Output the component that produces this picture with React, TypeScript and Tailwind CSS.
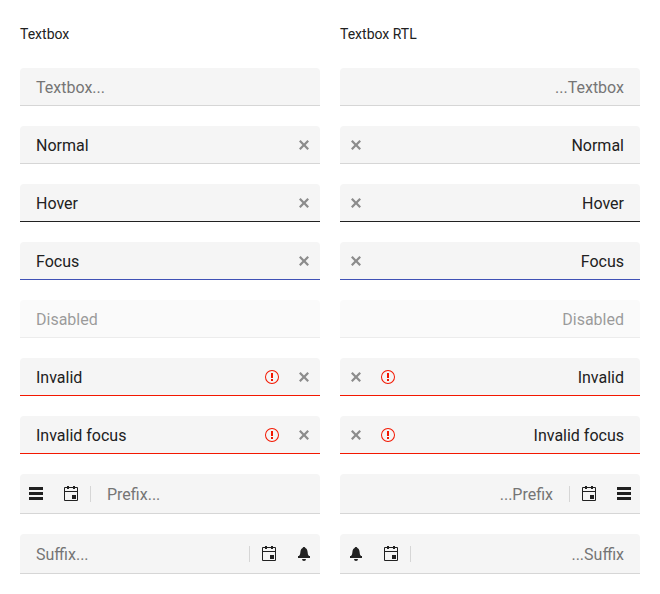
import type { ReactNode } from "react";

const CloseIcon = () => (
  <svg className="size-4 shrink-0 text-[#8c8c8c]" viewBox="0 0 16 16" fill="currentColor">
    <path d="M13 4.600 9.600 8l3.400 3.400-1.600 1.600L8 9.600 4.600 13 3 11.400 6.400 8 3 4.600 4.600 3 8 6.400 11.400 3z" />
  </svg>
);

const WarningIcon = () => (
  <svg className="size-4 shrink-0 text-[#f31700]" viewBox="0 0 16 16" fill="currentColor">
    <path d="M8 1a7 7 0 1 0 0 14A7 7 0 0 0 8 1zm0 13A6 6 0 1 1 8 2a6 6 0 0 1 0 12zM7 4h2v5H7zM7 10h2v2H7z" />
  </svg>
);

const MenuIcon = () => (
  <svg className="size-4 shrink-0" viewBox="0 0 16 16" fill="currentColor">
    <path d="M1 1h14v3H1zM1 6h14v3H1zM1 11h14v3H1z" />
  </svg>
);

const CalendarIcon = () => (
  <svg className="size-4 shrink-0" viewBox="0 0 16 16" fill="currentColor">
    <path d="M14 1h-2V0h-2v1H6V0H4v1H2a1 1 0 0 0-1 1v12a1 1 0 0 0 1 1h12a1 1 0 0 0 1-1V2a1 1 0 0 0-1-1zM4 2v1h2V2h4v1h2V2h2v3H2V2zM2 14V6h12v8zM9 9h4v4H9z" />
  </svg>
);

const BellIcon = () => (
  <svg className="size-4 shrink-0" viewBox="0 0 16 16" fill="currentColor">
    <path d="M2 12v-1.900h.9C4 9.200 4.200 8 4.400 6 4.600 3.700 5.500 2.500 6.700 2 6.800 1.400 7.300 1 8 1s1.200.4 1.300 1c1.200.5 2.100 1.700 2.300 4 .2 2 .4 3.200 1.500 4.100h.9V12zM6 13h4a2 2 0 0 1-4 0z" />
  </svg>
);

const Separator = () => <span className="h-4 w-px shrink-0 bg-[#d6d6d6]" />;

type FieldProps = {
  text: string;
  line?: string;
  tone?: string;
  clear?: boolean;
  invalid?: boolean;
};

function Field({ text, line = "border-[#d6d6d6]", tone = "text-[#212121]", clear, invalid }: FieldProps) {
  return (
    <div className={`flex h-[38px] items-start rounded-t border-b bg-[#f5f5f5] px-4 ${line}`}>
      <span className={`flex-1 pt-2 leading-6 ${tone}`}>{text}</span>
      <span className="-me-2 flex gap-4 pt-[11px]">
        {invalid && <WarningIcon />}
        {clear && <CloseIcon />}
      </span>
    </div>
  );
}

function AdornedField({ children }: { children: ReactNode }) {
  return (
    <div className="flex h-10 items-start rounded-t border-b border-[#d6d6d6] bg-[#f5f5f5] px-2 text-[#212121]">
      {children}
    </div>
  );
}

function Column({ title, dir }: { title: string; dir: "ltr" | "rtl" }) {
  return (
    <section className="w-[300px]">
      <h2 className="mb-6 h-5 text-sm leading-5 text-[#212121]">{title}</h2>
      <div dir={dir} className="flex flex-col gap-5">
        <Field text="Textbox..." tone="text-[#757575]" />
        <Field text="Normal" clear />
        <Field text="Hover" line="border-[#212121]" clear />
        <Field text="Focus" line="border-[#3f51b5]" clear />
        <div className="opacity-45">
          <Field text="Disabled" />
        </div>
        <Field text="Invalid" line="border-[#f31700]" invalid clear />
        <Field text="Invalid focus" line="border-[#f31700]" invalid clear />
        <AdornedField>
          <span className="flex pt-3">
            <MenuIcon />
            <span className="ms-[19px] me-[11px] flex">
              <CalendarIcon />
            </span>
            <Separator />
          </span>
          <span className="flex-1 px-4 pt-[9px] leading-6 text-[#757575]">Prefix...</span>
        </AdornedField>
        <AdornedField>
          <span className="flex-1 px-2 pt-[9px] leading-6 text-[#757575]">Suffix...</span>
          <span className="flex pt-3">
            <Separator />
            <span className="ms-[11px] me-[19px] flex">
              <CalendarIcon />
            </span>
            <BellIcon />
          </span>
        </AdornedField>
      </div>
    </section>
  );
}

export default function App() {
  return (
    <main className="flex h-[594px] w-[660px] gap-5 bg-white px-5 pt-6 font-['Roboto',sans-serif] text-base">
      <Column title="Textbox" dir="ltr" />
      <Column title="Textbox RTL" dir="rtl" />
    </main>
  );
}
